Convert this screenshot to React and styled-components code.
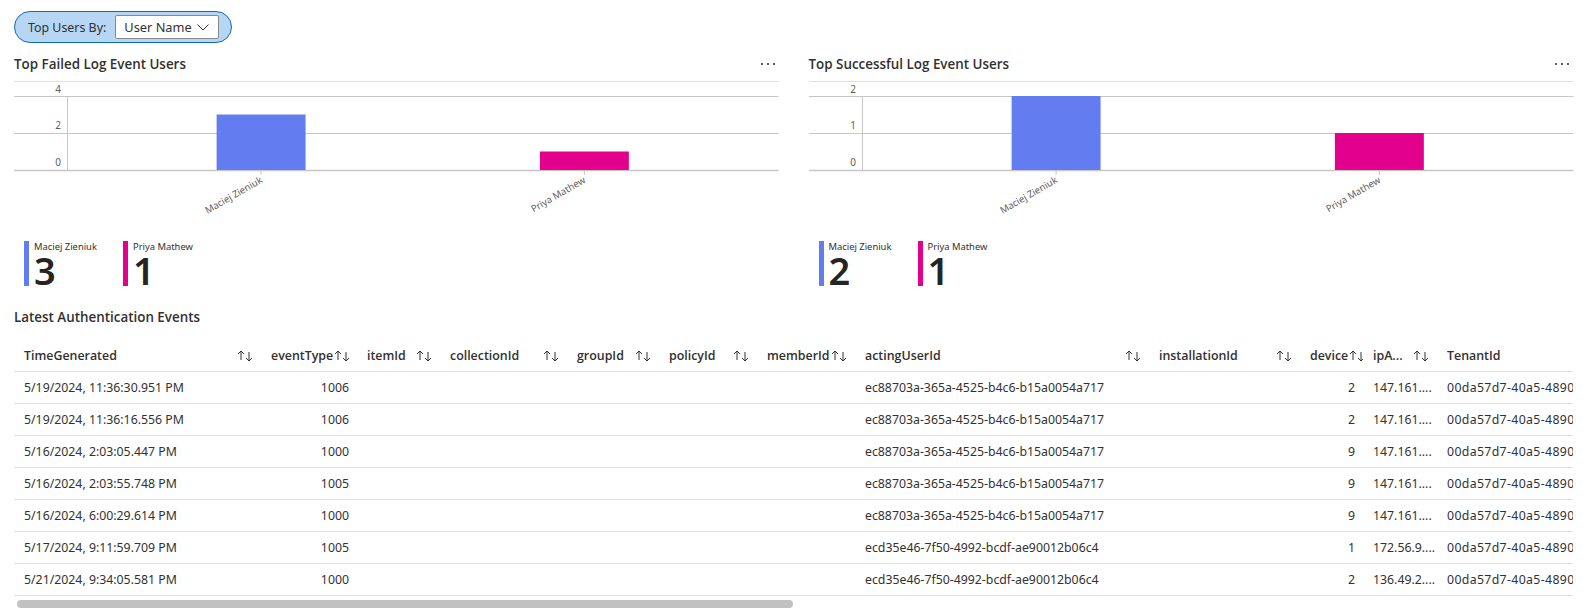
import React from "react";
import styled, { createGlobalStyle } from "styled-components";

const GlobalStyle = createGlobalStyle`
  html, body {
    margin: 0;
    padding: 0;
    background: #ffffff;
  }
  body {
    font-family: "Noto Sans", "Open Sans", "Liberation Sans", sans-serif;
    color: #323130;
  }
`;

const SEMI = `"Open Sans", "Noto Sans", "Liberation Sans", sans-serif`;

const Page = styled.div`
  width: 1586px;
  box-sizing: border-box;
  padding: 11px 13px 0 14px;
`;

const FilterPill = styled.div`
  display: inline-flex;
  align-items: center;
  gap: 9px;
  box-sizing: border-box;
  height: 32px;
  padding: 0 12px 0 13px;
  border: 1px solid #0f6cbd;
  border-radius: 16px;
  background: #b6d6f3;
`;

const FilterLabel = styled.span`
  font-size: 12.4px;
  color: #323130;
`;

const Select = styled.div`
  display: flex;
  align-items: center;
  justify-content: space-between;
  box-sizing: border-box;
  width: 104px;
  height: 24px;
  padding: 0 9px 0 8px;
  border: 1px solid #8a8886;
  border-radius: 2px;
  background: #ffffff;
  font-size: 12.8px;
`;

const ChartsRow = styled.div`
  display: grid;
  grid-template-columns: 1fr 1fr;
  column-gap: 30px;
  margin-top: 10px;
`;

const Panel = styled.section`
  display: flex;
  flex-direction: column;
  min-width: 0;
`;

const PanelHeader = styled.div`
  display: flex;
  align-items: center;
  justify-content: space-between;
  height: 22px;
  padding-right: 4px;
`;

const Title = styled.h2`
  margin: 0;
  font-family: ${SEMI};
  font-size: 13.4px;
  font-weight: 600;
  line-height: 22px;
  color: #323130;
`;

const ChartBox = styled.div`
  margin-top: 6px;
  height: 135px;
  svg {
    display: block;
    width: 100%;
    height: 135px;
    overflow: visible;
  }
`;

const Legend = styled.div`
  display: flex;
  margin-top: 25px;
  padding-left: 10px;
`;

const LegendItem = styled.div`
  display: flex;
  width: 99px;
`;

const Swatch = styled.span`
  width: 5px;
  height: 45px;
  background: ${(p) => p.$color};
`;

const LegendText = styled.div`
  display: flex;
  flex-direction: column;
  padding-left: 5px;
`;

const LegendName = styled.span`
  font-size: 9.4px;
  line-height: 11px;
  color: #323130;
  white-space: nowrap;
`;

const LegendValue = styled.span`
  margin-top: 1px;
  font-size: 38px;
  line-height: 34px;
  font-weight: 600;
  color: #252423;
`;

const SectionTitle = styled(Title)`
  margin-top: 19px;
`;

const TableWrap = styled.div`
  margin-top: 12px;
  overflow: hidden;
`;

const columns = [
  { key: "time", label: "TimeGenerated", width: 247 },
  { key: "eventType", label: "eventType", width: 96, num: true },
  { key: "itemId", label: "itemId", width: 83 },
  { key: "collectionId", label: "collectionId", width: 127 },
  { key: "groupId", label: "groupId", width: 92 },
  { key: "policyId", label: "policyId", width: 98 },
  { key: "memberId", label: "memberId", width: 98 },
  { key: "actingUserId", label: "actingUserId", width: 294 },
  { key: "installationId", label: "installationId", width: 151 },
  { key: "device", label: "device", width: 63, num: true },
  { key: "ip", label: "ipA...", width: 74 },
  { key: "tenant", label: "TenantId", width: 300 },
  { key: "type", label: "Type", width: 180 },
  { key: "source", label: "SourceSystem", width: 180 },
  { key: "computer", label: "Computer", width: 200 },
  { key: "resource", label: "_ResourceId", width: 835 },
];

const template = columns.map((c) => `${c.width}px`).join(" ");
const tableWidth = columns.reduce((s, c) => s + c.width, 0);

const Row = styled.div`
  display: grid;
  grid-template-columns: ${template};
  width: ${tableWidth}px;
  height: 32px;
  box-sizing: border-box;
  border-bottom: 1px solid #e1dfdd;
`;

const HeadCell = styled.div`
  display: flex;
  align-items: center;
  gap: 1px;
  padding: 0 8px 0 10px;
  font-family: ${SEMI};
  font-size: 12.4px;
  font-weight: 600;
  color: #323130;
  white-space: nowrap;
  overflow: hidden;
`;

const HeadLabel = styled.span`
  flex: 1 0 auto;
`;

const Cell = styled.div`
  display: flex;
  align-items: center;
  justify-content: ${(p) => (p.$num ? "flex-end" : "flex-start")};
  padding: 0 8px 0 10px;
  font-size: 12.3px;
  letter-spacing: ${(p) => (p.$wide ? "0.35px" : "normal")};
  color: #323130;
  white-space: nowrap;
  overflow: hidden;
`;

const ScrollTrack = styled.div`
  margin-top: 4px;
  padding-left: 3px;
  height: 8px;
`;

const ScrollThumb = styled.div`
  width: ${(p) => p.$ratio * 100}%;
  height: 8px;
  border-radius: 4px;
  background: #c1c1c1;
`;

const Chevron = () => (
  <svg width="12" height="7" viewBox="0 0 12 7">
    <polyline points="0.5,0.5 6,6 11.5,0.5" fill="none" stroke="#323130" strokeWidth="1" />
  </svg>
);

const MoreDots = () => (
  <svg width="14" height="4" viewBox="0 0 14 4">
    <rect x="0" y="1" width="2" height="2" fill="#605e5c" />
    <rect x="6" y="1" width="2" height="2" fill="#605e5c" />
    <rect x="12" y="1" width="2" height="2" fill="#605e5c" />
  </svg>
);

const SortIcon = () => (
  <svg width="16" height="12" viewBox="0 0 16 12" style={{ flexShrink: 0 }}>
    <g fill="none" stroke="#323130" strokeWidth="1">
      <line x1="4" y1="1" x2="4" y2="10" />
      <polyline points="1,4 4,1 7,4" />
      <line x1="12" y1="2" x2="12" y2="11" />
      <polyline points="9,8 12,11 15,8" />
    </g>
  </svg>
);

const BLUE = "#637cef";
const PINK = "#e3008c";

const BarChart = ({ data, max }) => {
  const W = 765;
  const top = 15;
  const base = 89;
  const axisX = 53;
  const band = 323.5;
  const mid = (axisX + W) / 2;
  const y = (v) => base - (v / max) * (base - top);
  const ticks = [max, max / 2, 0];
  return (
    <svg viewBox="0 0 765 135">
      <line x1="0" y1="0.5" x2={W} y2="0.5" stroke="#e1dfdd" />
      {ticks.map((t) => (
        <g key={t}>
          <line
            x1="0"
            y1={y(t) + 0.5}
            x2={W}
            y2={y(t) + 0.5}
            stroke="#c8c6c4"
            strokeWidth={t === 0 ? 1.6 : 1}
          />
          <text x="47" y={y(t) - 3.5} textAnchor="end" fontSize="10" fill="#605e5c" fontFamily="Noto Sans, sans-serif">
            {t}
          </text>
        </g>
      ))}
      <line x1={axisX + 0.5} y1={top} x2={axisX + 0.5} y2={base + 1} stroke="#c8c6c4" />
      {data.map((d, i) => {
        const cx = mid + (i - (data.length - 1) / 2) * band;
        return (
          <g key={d.name}>
            <rect x={cx - 44.5} y={y(d.value)} width="89" height={base - y(d.value)} fill={d.color} />
            <line x1={cx} y1={base + 1} x2={cx} y2={base + 5} stroke="#c8c6c4" />
            <text
              transform={`translate(${cx + 2} 101) rotate(-30)`}
              textAnchor="end"
              fontSize="9.6"
              fill="#605e5c"
              fontFamily="Noto Sans, sans-serif"
            >
              {d.name}
            </text>
          </g>
        );
      })}
    </svg>
  );
};

const ChartPanel = ({ title, data, max }) => (
  <Panel>
    <PanelHeader>
      <Title>{title}</Title>
      <MoreDots />
    </PanelHeader>
    <ChartBox>
      <BarChart data={data} max={max} />
    </ChartBox>
    <Legend>
      {data.map((d) => (
        <LegendItem key={d.name}>
          <Swatch $color={d.color} />
          <LegendText>
            <LegendName>{d.name}</LegendName>
            <LegendValue>{d.value}</LegendValue>
          </LegendText>
        </LegendItem>
      ))}
    </Legend>
  </Panel>
);

const failed = [
  { name: "Maciej Zieniuk", value: 3, color: BLUE },
  { name: "Priya Mathew", value: 1, color: PINK },
];

const successful = [
  { name: "Maciej Zieniuk", value: 2, color: BLUE },
  { name: "Priya Mathew", value: 1, color: PINK },
];

const USER_A = "ec88703a-365a-4525-b4c6-b15a0054a717";
const USER_B = "ecd35e46-7f50-4992-bcdf-ae90012b06c4";
const TENANT = "00da57d7-40a5-4890-9c2e-7b41f3a6d0e8";

const events = [
  { time: "5/19/2024, 11:36:30.951 PM", eventType: 1006, actingUserId: USER_A, device: 2, ip: "147.161...." },
  { time: "5/19/2024, 11:36:16.556 PM", eventType: 1006, actingUserId: USER_A, device: 2, ip: "147.161...." },
  { time: "5/16/2024, 2:03:05.447 PM", eventType: 1000, actingUserId: USER_A, device: 9, ip: "147.161...." },
  { time: "5/16/2024, 2:03:55.748 PM", eventType: 1005, actingUserId: USER_A, device: 9, ip: "147.161...." },
  { time: "5/16/2024, 6:00:29.614 PM", eventType: 1000, actingUserId: USER_A, device: 9, ip: "147.161...." },
  { time: "5/17/2024, 9:11:59.709 PM", eventType: 1005, actingUserId: USER_B, device: 1, ip: "172.56.9...." },
  { time: "5/21/2024, 9:34:05.581 PM", eventType: 1000, actingUserId: USER_B, device: 2, ip: "136.49.2...." },
].map((e) => ({
  ...e,
  tenant: TENANT,
  type: "BitwardenEventLogs_CL",
  source: "RestAPI",
}));

const visibleWidth = 1559;

export default function App() {
  return (
    <Page>
      <GlobalStyle />
      <FilterPill>
        <FilterLabel>Top Users By:</FilterLabel>
        <Select>
          <span>User Name</span>
          <Chevron />
        </Select>
      </FilterPill>

      <ChartsRow>
        <ChartPanel title="Top Failed Log Event Users" data={failed} max={4} />
        <ChartPanel title="Top Successful Log Event Users" data={successful} max={2} />
      </ChartsRow>

      <SectionTitle>Latest Authentication Events</SectionTitle>
      <TableWrap>
        <Row>
          {columns.map((c) => (
            <HeadCell key={c.key}>
              <HeadLabel>{c.label}</HeadLabel>
              <SortIcon />
            </HeadCell>
          ))}
        </Row>
        {events.map((e, i) => (
          <Row key={i}>
            {columns.map((c) => (
              <Cell key={c.key} $num={c.num} $wide={c.key === "tenant"}>
                {e[c.key] ?? ""}
              </Cell>
            ))}
          </Row>
        ))}
      </TableWrap>
      <ScrollTrack>
        <ScrollThumb $ratio={(visibleWidth / tableWidth) * 0.998} />
      </ScrollTrack>
    </Page>
  );
}
